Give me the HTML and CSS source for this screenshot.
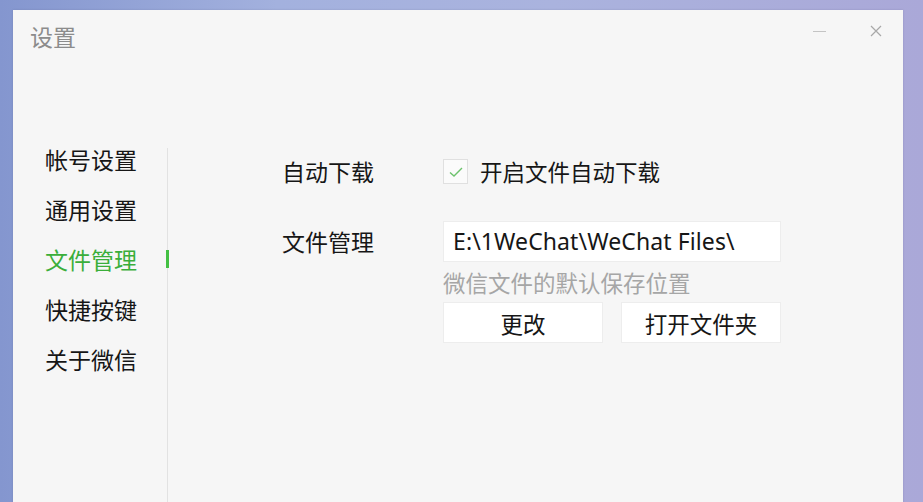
FILE: index.html
```html
<!DOCTYPE html>
<html lang="zh-CN">
<head>
<meta charset="utf-8">
<title>设置</title>
<link rel="stylesheet" href="styles.css">
</head>
<body>
<div class="window">
  <div class="titlebar">
    <span class="title">设置</span>
    <div class="controls">
      <span class="ctl min"></span>
      <span class="ctl close">
        <svg width="12" height="12" viewBox="0 0 12 12"><path d="M1 1L11 11M11 1L1 11" stroke="#a8a8a8" stroke-width="1.2" fill="none"/></svg>
      </span>
    </div>
  </div>
  <div class="main">
    <nav class="sidebar">
      <div class="nav-item">帐号设置</div>
      <div class="nav-item">通用设置</div>
      <div class="nav-item active">文件管理</div>
      <div class="nav-item">快捷按键</div>
      <div class="nav-item">关于微信</div>
    </nav>
    <section class="content">
      <div class="row row-download">
        <div class="label">自动下载</div>
        <label class="check">
          <span class="box">
            <svg width="16" height="12" viewBox="0 0 16 12"><path d="M2 6.5L6 10L14 2" stroke="#6cc26c" stroke-width="1.4" fill="none"/></svg>
          </span>
          <span class="check-text">开启文件自动下载</span>
        </label>
      </div>
      <div class="row row-files">
        <div class="label label-files">文件管理</div>
        <div class="files">
          <div class="path">E:\1WeChat\WeChat Files\</div>
          <div class="hint">微信文件的默认保存位置</div>
          <div class="buttons">
            <button class="btn">更改</button>
            <button class="btn">打开文件夹</button>
          </div>
        </div>
      </div>
    </section>
  </div>
</div>
</body>
</html>
```

FILE: styles.css
```css
html, body {
  margin: 0;
  height: 100%;
}

body {
  overflow: hidden;
  background: linear-gradient(90deg, #8496cf 0%, #a3b1de 30%, #aab3de 60%, #aaa8d8 100%);
  font-family: "Noto Sans CJK SC", "Noto Sans", sans-serif;
  color: #161616;
}

.window {
  margin: 10px 0 0 13px;
  width: 890px;
  height: 540px;
  background: #f6f6f6;
  display: flex;
  flex-direction: column;
  box-shadow: 0 0 2px rgba(80, 80, 120, 0.25);
}

.titlebar {
  height: 138px;
  display: flex;
  justify-content: space-between;
  align-items: flex-start;
}

.title {
  margin: 11px 0 0 17px;
  font-size: 23px;
  line-height: 30px;
  color: #8c8c8c;
}

.controls {
  display: flex;
  align-items: center;
  gap: 44px;
  margin: 6px 21px 0 0;
  height: 30px;
}

.ctl.min {
  display: block;
  width: 13px;
  height: 1px;
  background: #c4c4c4;
}

.ctl.close {
  display: flex;
}

.main {
  flex: 1;
  display: flex;
}

.sidebar {
  width: 122px;
  padding: 0 0 0 32px;
  border-right: 1px solid #e2e2e2;
  display: flex;
  flex-direction: column;
  gap: 28px;
}

.nav-item {
  position: relative;
  font-size: 23px;
  line-height: 22px;
  color: #161616;
}

.nav-item.active {
  color: #3aae3a;
}

.nav-item.active::after {
  content: "";
  position: absolute;
  right: -2px;
  top: 2px;
  width: 3px;
  height: 18px;
  background: #43c043;
}

.content {
  flex: 1;
  padding: 11px 0 0 114px;
}

.row {
  display: flex;
}

.label {
  width: 161px;
  font-size: 23px;
  line-height: 25px;
}

.row-download {
  align-items: center;
}

.check {
  display: flex;
  align-items: center;
  gap: 12px;
}

.box {
  width: 25px;
  height: 25px;
  box-sizing: border-box;
  border: 1px solid #e0e0e0;
  background: #fbfbfb;
  display: flex;
  align-items: center;
  justify-content: center;
}

.check-text {
  font-size: 22.5px;
  line-height: 25px;
}

.row-files {
  margin-top: 37px;
}

.label-files {
  line-height: 41px;
}

.files {
  display: flex;
  flex-direction: column;
}

.path {
  width: 338px;
  height: 41px;
  box-sizing: border-box;
  padding-left: 9px;
  background: #ffffff;
  border: 1px solid #ededed;
  font-size: 23px;
  line-height: 39px;
  color: #161616;
  font-family: "Noto Sans", "Noto Sans CJK SC", sans-serif;
  letter-spacing: 0.1px;
}

.hint {
  margin-top: 9px;
  font-size: 22.5px;
  line-height: 22px;
  color: #a6a6a6;
}

.buttons {
  margin-top: 9px;
  display: flex;
  gap: 18px;
}

.btn {
  width: 160px;
  height: 41px;
  background: #ffffff;
  border: 1px solid #ededed;
  font-family: "Noto Sans CJK SC", sans-serif;
  font-size: 22.5px;
  color: #161616;
  padding: 0;
}
```
